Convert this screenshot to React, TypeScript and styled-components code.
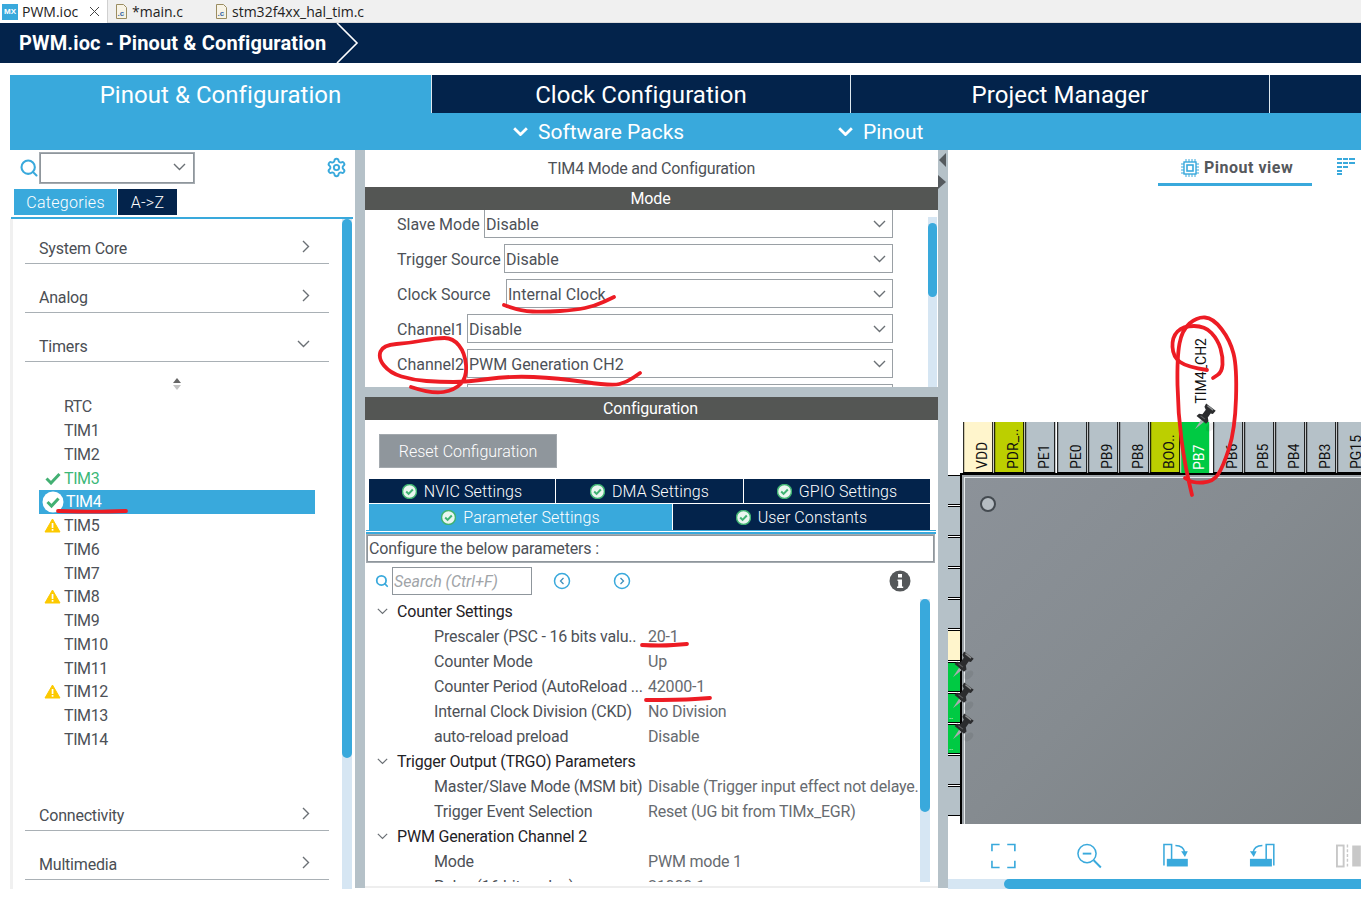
import React from 'react';
import styled, { createGlobalStyle } from 'styled-components';
import { Search, Settings } from 'lucide-react';

const NAVY = '#03234b';
const BLUE = '#39a9dc';
const GUTTER = '#b5c1c8';
const TRACK = '#d6e6f3';
const RED = '#ed1c24';

const GlobalStyle = createGlobalStyle`
  html, body {
    margin: 0;
    padding: 0;
    background: #ffffff;
    overflow: hidden;
  }
  * { box-sizing: border-box; }
`;

const Page = styled.div`
  position: relative;
  width: 1361px;
  height: 898px;
  overflow: hidden;
  background: #ffffff;
  font-family: Roboto, "Liberation Sans", sans-serif;
  color: #4d5157;
`;

/* editor tabs */
const EditorTabs = styled.div`
  display: flex;
  height: 23px;
  background: #f0f0f0;
  border-bottom: 1px solid #dcdcdc;
  font-family: "Open Sans", "Noto Sans", sans-serif;
  font-size: 14px;
  color: #222;
`;

const EditorTab = styled.div<{ $width: number; $indent: number; $active?: boolean }>`
  display: flex;
  align-items: center;
  gap: 4px;
  width: ${p => p.$width}px;
  height: 23px;
  padding-left: ${p => p.$indent}px;
  background: ${p => (p.$active ? '#ffffff' : 'transparent')};
  border-right: ${p => (p.$active ? '1px solid #d0d0d0' : 'none')};
`;

const MxLogo = styled.span`
  display: inline-flex;
  align-items: center;
  justify-content: center;
  width: 16px;
  height: 16px;
  background: ${BLUE};
  color: #ffffff;
  font-family: "Liberation Sans", sans-serif;
  font-size: 8px;
  font-weight: 700;
`;

const CloseMark = styled.svg`
  margin-left: 7px;
`;

/* breadcrumb */
const Breadcrumb = styled.div`
  display: flex;
  align-items: center;
  height: 40px;
  background: ${NAVY};
  padding-left: 19px;
  color: #ffffff;
  font-size: 20px;
  font-weight: 700;
  letter-spacing: 0.13px;
`;

const BreadcrumbArrow = styled.svg`
  margin-left: 10px;
`;

const Workspace = styled.div`
  margin: 12px 0 0 10px;
`;

const MainTabs = styled.div`
  display: flex;
  height: 38px;
  background: ${NAVY};
`;

const MainTab = styled.div<{ $active?: boolean }>`
  display: flex;
  align-items: center;
  justify-content: center;
  width: 419px;
  padding-top: 2px;
  background: ${p => (p.$active ? BLUE : NAVY)};
  border-right: 1px solid #dfe8ee;
  color: #ffffff;
  font-size: 24px;
  letter-spacing: 0.05px;
  &:first-child { width: 422px; }
`;

const SubBar = styled.div`
  display: flex;
  align-items: center;
  height: 37px;
  background: ${BLUE};
  padding-left: 503px;
  color: #ffffff;
  font-size: 21px;
`;

const SubItem = styled.div<{ $width: number }>`
  display: flex;
  align-items: center;
  gap: 10px;
  width: ${p => p.$width}px;
`;

const Columns = styled.div`
  display: grid;
  grid-template-columns: 345px 10px 573px 10px 413px;
  height: 738px;
  background: ${GUTTER};
`;

/* left column */
const LeftPanel = styled.div`
  position: relative;
  background: #ffffff;
`;

const LeftSearch = styled.div`
  display: flex;
  align-items: center;
  height: 35px;
  padding: 0 8px 0 9px;
`;

const Combo = styled.div`
  display: flex;
  align-items: center;
  justify-content: flex-end;
  width: 154px;
  height: 30px;
  margin-left: 1px;
  padding-right: 7px;
  border: 1px solid #8f969c;
  outline: 0.5px solid #a5abb0;
`;

const GearSlot = styled.div`
  display: flex;
  margin-left: auto;
`;

const ViewTabs = styled.div`
  display: flex;
  gap: 1px;
  height: 26px;
  margin: 4px 0 0 4px;
`;

const ViewTab = styled.div<{ $active?: boolean; $width: number }>`
  display: flex;
  align-items: center;
  justify-content: center;
  width: ${p => p.$width}px;
  background: ${p => (p.$active ? BLUE : NAVY)};
  color: #ffffff;
  font-size: 16px;
  font-weight: 300;
  letter-spacing: 0.3px;
`;

const DoubleRule = styled.div`
  height: 3px;
  margin: 1px 2px 0 1px;
  border-bottom: 2px solid ${BLUE};
`;

const Categories = styled.div`
  display: grid;
  grid-template-columns: 1fr 10px;
  column-gap: 13px;
  height: 670px;
  border-left: 3px solid #f0f0f0;
  padding-right: 3px;
`;

const CategoryList = styled.div`
  padding: 15px 0 0 12px;
  font-size: 16px;
`;

const Group = styled.div<{ $gap?: number }>`
  display: flex;
  align-items: center;
  justify-content: space-between;
  height: 30px;
  margin-top: ${p => p.$gap ?? 19}px;
  padding-right: 19px;
  border-bottom: 1px solid #a9b0b5;
  padding-left: 14px;
  color: #4a4e54;
  letter-spacing: -0.2px;
`;

const GroupMark = styled.span`
  display: flex;
  margin-bottom: 4px;
`;

const SortMark = styled.div`
  display: flex;
  justify-content: center;
  height: 19px;
  margin-top: 14px;
  padding-top: 2px;
`;

const TimerList = styled.div`
  width: 276px;
  margin-left: 14px;
`;

const TimerRow = styled.div<{ $selected?: boolean; $ok?: boolean }>`
  display: flex;
  align-items: center;
  height: 23.75px;
  padding-left: ${p => (p.$selected ? 0 : 2)}px;
  background: ${p => (p.$selected ? BLUE : 'transparent')};
  color: ${p => (p.$selected ? '#ffffff' : p.$ok ? '#3cb878' : '#4d5157')};
  letter-spacing: -0.4px;
`;

const TimerIcon = styled.span<{ $selected?: boolean }>`
  display: flex;
  align-items: center;
  justify-content: center;
  width: ${p => (p.$selected ? 27 : 23)}px;
  flex: none;
`;

const Scrollbar = styled.div<{ $thumbTop: number; $thumbHeight: number }>`
  position: relative;
  background: ${TRACK};
  &::after {
    content: '';
    position: absolute;
    left: 0;
    right: 0;
    top: ${p => p.$thumbTop}px;
    height: ${p => p.$thumbHeight}px;
    border-radius: 5px;
    background: ${BLUE};
  }
`;

/* middle column */
const Gutter = styled.div`
  display: flex;
  flex-direction: column;
  gap: 8px;
  padding-top: 3px;
`;

const Middle = styled.div`
  display: flex;
  flex-direction: column;
  gap: 10px;
`;

const ModePanel = styled.section`
  height: 237px;
  background: #ffffff;
  overflow: hidden;
`;

const PanelTitle = styled.div`
  display: flex;
  align-items: center;
  justify-content: center;
  height: 37px;
  font-size: 16px;
  letter-spacing: -0.19px;
  color: #4d5157;
`;

const DarkBar = styled.div`
  display: flex;
  align-items: center;
  justify-content: center;
  height: 23px;
  padding-right: 2px;
  background: #545654;
  color: #ffffff;
  font-size: 16px;
  letter-spacing: -0.1px;
`;

const ModeBody = styled.div`
  display: grid;
  grid-template-columns: 1fr 9px;
  column-gap: 35px;
  height: 177px;
  overflow: hidden;
  padding-right: 1px;
`;

const ModeRows = styled.div`
  display: flex;
  flex-direction: column;
  gap: 6px;
  margin-top: -1px;
  padding-left: 32px;
  font-size: 16px;
`;

const ModeRow = styled.div`
  display: flex;
  align-items: center;
  flex: none;
  height: 29px;
`;

const ModeLabel = styled.div<{ $width: number }>`
  width: ${p => p.$width}px;
  flex: none;
  padding-top: 1px;
  white-space: nowrap;
`;

const ModeSelect = styled.div`
  display: flex;
  align-items: center;
  justify-content: space-between;
  flex: 1;
  height: 29px;
  padding: 1px 6px 0 1px;
  border: 1px solid #9aa0a5;
`;

const ModeTrack = styled(Scrollbar)`
  margin-top: 7px;
  height: 170px;
`;

const ConfigPanel = styled.section`
  height: 491px;
  background: #ffffff;
`;

const ResetButton = styled.div`
  display: flex;
  align-items: center;
  justify-content: center;
  width: 178px;
  height: 34px;
  margin: 14px 0 11px 14px;
  background: #8f969c;
  border: 1px solid #a3a9ae;
  color: #ffffff;
  font-size: 16px;
  font-weight: 300;
`;

const SettingTabs = styled.div`
  display: grid;
  gap: 1px;
  width: 561px;
  margin-left: 4px;
`;

const SettingRow = styled.div<{ $columns: string; $height: number }>`
  display: grid;
  grid-template-columns: ${p => p.$columns};
  gap: 1px;
  height: ${p => p.$height}px;
`;

const SettingTab = styled.div<{ $active?: boolean }>`
  display: flex;
  align-items: center;
  justify-content: center;
  gap: 7px;
  background: ${p => (p.$active ? BLUE : NAVY)};
  color: #ffffff;
  font-size: 16px;
  font-weight: 300;
  letter-spacing: 0.1px;
`;

const ConfigRule = styled.div`
  height: 4px;
  margin: 0 2px 0 1px;
  border-top: 1px solid ${BLUE};
  border-bottom: 2px solid ${BLUE};
`;

const ConfigureBox = styled.div`
  display: flex;
  align-items: center;
  height: 27px;
  margin: 1px 4px 0 2px;
  padding-left: 1px;
  border: 1px solid #8f969c;
  outline: 0.5px solid #a5abb0;
  font-size: 16px;
  letter-spacing: -0.18px;
`;

const SearchRow = styled.div`
  display: flex;
  align-items: center;
  height: 28px;
  margin-top: 5px;
  padding: 0 27px 0 10px;
`;

const SearchBox = styled.div`
  display: flex;
  align-items: center;
  width: 140px;
  height: 28px;
  margin: 0 21px 0 3px;
  padding-left: 1px;
  border: 1px solid #8f969c;
  color: #a0a4a8;
  font-size: 16px;
  font-style: italic;
`;

const NavSlot = styled.div`
  display: flex;
  gap: 42px;
`;

const InfoSlot = styled.div`
  display: flex;
  margin-left: auto;
`;

const TreeArea = styled.div`
  display: grid;
  grid-template-columns: 1fr 10px;
  column-gap: 1px;
  height: 289px;
  margin-top: 4px;
  padding: 0 8px 6px 2px;
  overflow: hidden;
  font-size: 16px;
  letter-spacing: -0.2px;
  border-bottom: 2px solid #eeeeee;
`;

const Tree = styled.div`
  height: 283px;
  overflow: hidden;
`;

const TreeSection = styled.div`
  display: flex;
  align-items: center;
  gap: 9px;
  height: 25px;
  padding-left: 10px;
  color: #1f2226;
`;

const TreeRow = styled.div`
  display: grid;
  grid-template-columns: 214px 1fr;
  align-items: center;
  height: 25px;
  padding-left: 67px;
  white-space: nowrap;
`;

const TreeValue = styled.span`
  color: #676b70;
`;

/* right column */
const RightPanel = styled.section`
  display: flex;
  flex-direction: column;
  background: #ffffff;
  overflow: hidden;
`;

const ViewHeader = styled.div`
  display: flex;
  align-items: center;
  flex: none;
  height: 36px;
  padding-left: 210px;
`;

const PinoutView = styled.div`
  display: flex;
  align-items: center;
  gap: 5px;
  width: 154px;
  height: 34px;
  margin-top: 1px;
  padding: 1px 0 0 23px;
  border-bottom: 3px solid ${BLUE};
  color: #55585c;
  font-size: 16px;
  font-weight: 700;
  letter-spacing: 0.5px;
`;

const ListViewIcon = styled.svg`
  margin-left: 25px;
  margin-top: -3px;
`;

const Canvas = styled.div`
  position: relative;
  flex: none;
  height: 638px;
  overflow: hidden;
  background: #ffffff;
`;

const TopPins = styled.div`
  position: absolute;
  left: 15px;
  top: 236px;
  display: flex;
  gap: 1px;
`;

const TopPin = styled.div<{ $bg: string; $light?: boolean; $active?: boolean }>`
  display: flex;
  align-items: center;
  justify-content: flex-start;
  flex: none;
  width: ${p => (p.$active ? 28.2 : 30.2)}px;
  height: 51px;
  margin-right: ${p => (p.$active ? 2 : 0)}px;
  padding-top: 3px;
  padding-right: 8px;
  background: ${p => p.$bg};
  border: ${p => (p.$active ? '0' : '1px solid #000')};
  border-bottom: 0;
  color: ${p => (p.$light ? '#ffffff' : '#111')};
  font-size: 14px;
  writing-mode: vertical-rl;
  transform: rotate(180deg);
  white-space: nowrap;
  overflow: hidden;
`;

const SidePins = styled.div`
  position: absolute;
  left: 0;
  top: 289px;
  display: flex;
  flex-direction: column;
  gap: 1px;
  width: 12px;
`;

const SidePin = styled.div<{ $bg: string }>`
  position: relative;
  flex: none;
  height: 30.1px;
  background: ${p => p.$bg};
  border-top: 1px solid #000;
  border-bottom: 1px solid #000;
  color: #ffffff;
  font-size: 8px;
  line-height: 8px;
  text-align: left;
  padding: 19px 0 0 1px;
  overflow: hidden;
`;

const Chip = styled.div`
  position: absolute;
  left: 12px;
  top: 287px;
  width: 420px;
  height: 360px;
  padding: 2px;
  background: #9da3a8;
  border: 2px solid #000;
`;

const ChipFace = styled.div`
  position: relative;
  height: 100%;
  border-top: 1px solid #e8ecee;
  border-left: 1px solid #e8ecee;
  background: linear-gradient(135deg, #8c9299 0%, #858b90 45%, #797e81 100%);
`;

const ChipDot = styled.div`
  position: absolute;
  left: 15px;
  top: 18px;
  width: 16px;
  height: 16px;
  border-radius: 50%;
  border: 2px solid #444a50;
  background: #b5bcc2;
`;

const PinLabel = styled.div`
  position: absolute;
  left: 245px;
  top: 152px;
  writing-mode: vertical-rl;
  transform: rotate(180deg);
  color: #111;
  font-size: 14px;
`;

const PinSlot = styled.div<{ $x: number; $y: number }>`
  position: absolute;
  left: ${p => p.$x}px;
  top: ${p => p.$y}px;
  display: flex;
`;

const BottomTools = styled.div`
  display: flex;
  align-items: center;
  flex: none;
  gap: 61px;
  height: 55px;
  padding: 8px 0 0 43px;
`;

const BottomTrack = styled.div`
  flex: none;
  height: 10px;
  background: ${TRACK};
  padding-left: 56px;
`;

const BottomThumb = styled.div`
  height: 10px;
  border-radius: 5px 0 0 5px;
  background: ${BLUE};
`;

const Annotations = styled.svg`
  position: absolute;
  left: 0;
  top: 0;
  pointer-events: none;
`;

/* little drawings */
const Chevron: React.FC<{ color?: string; width?: number; strokeWidth?: number }> = ({
  color = '#6b7075',
  width = 13,
  strokeWidth = 1.4,
}) => (
  <svg width={width} height={width * 0.62} viewBox="0 0 13 8" fill="none">
    <path d="M1 1l5.5 5.5L12 1" stroke={color} strokeWidth={strokeWidth} />
  </svg>
);

const ChevronRight = () => (
  <svg width="8" height="13" viewBox="0 0 8 13" fill="none">
    <path d="M1 1l5.5 5.5L1 12" stroke="#6b7075" strokeWidth="1.4" />
  </svg>
);

const FileIcon = () => (
  <svg width="13" height="15" viewBox="0 0 13 15">
    <path d="M1.5.5h7l3 3v11h-10z" fill="#f7f3e6" stroke="#9a8c60" />
    <text x="2.5" y="11.5" fontSize="8" fontWeight="700" fill="#3a68a8" fontFamily="Liberation Sans">.c</text>
  </svg>
);

const GreenCheck = () => (
  <svg width="16" height="13" viewBox="0 0 16 13" fill="none">
    <path d="M1.5 6.5l4.5 4.5 8.5-9" stroke="#43b073" strokeWidth="3" />
  </svg>
);

const Warning = () => (
  <svg width="17" height="15" viewBox="0 0 17 15">
    <path d="M8.5 1L16 14H1z" fill="#fcc900" stroke="#fcc900" strokeLinejoin="round" />
    <rect x="7.7" y="5" width="1.7" height="5" fill="#fff" />
    <rect x="7.7" y="11" width="1.7" height="1.7" fill="#fff" />
  </svg>
);

const SelectedCheck = () => (
  <svg width="22" height="22" viewBox="0 0 22 22" fill="none">
    <circle cx="11" cy="11" r="10.5" fill="#fff" />
    <path d="M5.5 11l4 4 7-7.5" stroke="#43b073" strokeWidth="3" />
  </svg>
);

const TabCheck = () => (
  <svg width="15" height="15" viewBox="0 0 15 15" fill="none">
    <circle cx="7.5" cy="7.5" r="7" fill="#e9f6ef" stroke="#3fb272" strokeWidth="1.5" />
    <path d="M4.2 7.5l2.4 2.4 4.2-4.4" stroke="#3fb272" strokeWidth="2" />
  </svg>
);

const NavCircle: React.FC<{ back?: boolean }> = ({ back }) => (
  <svg width="18" height="18" viewBox="0 0 18 18" fill="none">
    <circle cx="9" cy="9" r="7.5" stroke={BLUE} strokeWidth="1.5" />
    <path d={back ? 'M10.5 6L7.5 9l3 3' : 'M7.5 6l3 3-3 3'} stroke="#3f8fbb" strokeWidth="1.3" />
  </svg>
);

const InfoIcon = () => (
  <svg width="22" height="22" viewBox="0 0 22 22">
    <circle cx="11" cy="11" r="10.5" fill="#55585a" />
    <rect x="9" y="4" width="4" height="3.5" fill="#fff" />
    <path d="M8.5 9.5H13v7h1.2V18H8v-1.5h1.2v-5.5H8.5z" fill="#fff" />
  </svg>
);

const ChipIcon = () => (
  <svg width="18" height="18" viewBox="0 0 18 18" fill="none" stroke={BLUE}>
    <rect x="3" y="3" width="12" height="12" strokeWidth="1.4" />
    <rect x="6" y="6" width="6" height="6" strokeWidth="1.6" />
    <path d="M5 0v3M8 0v3M11 0v3M14 0v3M5 15v3M8 15v3M11 15v3M14 15v3M0 5h3M0 8h3M0 11h3M0 14h3M15 5h3M15 8h3M15 11h3M15 14h3" strokeWidth="1" />
  </svg>
);

const Pushpin = () => (
  <svg width="34" height="36" viewBox="0 0 30 32">
    <ellipse cx="20" cy="24" rx="5" ry="3" fill="#000" opacity="0.07" transform="rotate(-40 20 24)" />
    <path d="M6 26l5.5-8.5 2.5 2z" fill="#a9adb0" />
    <path d="M16 3l8.5 6.5-2.5 3-2-.5-2.5 3.5.6 3.5-2.2 2.2L7.5 14.2l2.2-2 3 .5 3-4-1.2-2.6z" fill="#2b2c2e" />
    <path d="M17.2 5l5 4" stroke="#8a8c8e" strokeWidth="1.3" />
    <path d="M11 14l4 3" stroke="#5c5e60" strokeWidth="1" />
  </svg>
);

const FitIcon = () => (
  <svg width="26" height="26" viewBox="0 0 26 26" fill="none" stroke={BLUE} strokeWidth="1.7">
    <path d="M1 8V1h8M17 1h8v7M25 18v7h-8M9 25H1v-7" />
  </svg>
);

const ZoomOutIcon = () => (
  <svg width="26" height="26" viewBox="0 0 26 26" fill="none" stroke={BLUE}>
    <circle cx="10.5" cy="10.5" r="9.5" strokeWidth="1.6" />
    <path d="M6 10.5h9" strokeWidth="2" />
    <path d="M17.5 17.5L25 25" strokeWidth="2" />
  </svg>
);

const RotateRightIcon = () => (
  <svg width="27" height="25" viewBox="0 0 27 25" fill="none" stroke={BLUE}>
    <path d="M1 23V1h8v16" strokeWidth="1.6" />
    <rect x="4" y="16" width="22" height="8" fill={BLUE} stroke="none" />
    <path d="M13 2c5 0 9 2 10 8" strokeWidth="1.6" />
    <path d="M19 8h7l-3 6z" fill={BLUE} stroke="none" />
  </svg>
);

const RotateLeftIcon = () => (
  <svg width="27" height="25" viewBox="0 0 27 25" fill="none" stroke={BLUE}>
    <path d="M26 23V1h-8v16" strokeWidth="1.6" />
    <rect x="1" y="16" width="23" height="8" fill={BLUE} stroke="none" />
    <path d="M14 2c-5 0-9 2-10 8" strokeWidth="1.6" />
    <path d="M1 8h7l-3 6z" fill={BLUE} stroke="none" />
  </svg>
);

const SplitIcon = () => (
  <svg width="26" height="24" viewBox="0 0 26 24" fill="none">
    <rect x="1" y="1" width="7" height="22" stroke="#c8c8c8" strokeWidth="2" />
    <path d="M12 0v24" stroke="#c8c8c8" strokeWidth="1.5" strokeDasharray="3 2" />
    <rect x="17" y="1" width="9" height="22" fill="#c8c8c8" />
  </svg>
);

/* freehand marks */
type Pt = [number, number];

const smooth = (pts: Pt[]) => {
  let d = `M${pts[0][0]} ${pts[0][1]}`;
  for (let i = 1; i < pts.length - 1; i++) {
    const mx = (pts[i][0] + pts[i + 1][0]) / 2;
    const my = (pts[i][1] + pts[i + 1][1]) / 2;
    d += ` Q${pts[i][0]} ${pts[i][1]} ${mx} ${my}`;
  }
  const last = pts[pts.length - 1];
  return `${d} L${last[0]} ${last[1]}`;
};

const strokes: Pt[][] = [
  [[58, 511], [90, 512], [126, 511]],
  [[504, 305], [520, 311], [545, 312], [575, 310], [595, 306], [614, 297]],
  [[411, 387], [432, 394], [455, 390], [467, 377], [465, 353], [453, 338], [436, 338], [410, 343], [383, 345], [378, 358], [390, 373], [413, 380], [440, 382], [467, 382], [509, 376], [558, 378], [612, 386], [627, 382], [640, 373]],
  [[642, 645], [660, 646], [687, 644]],
  [[646, 700], [680, 700], [710, 698]],
  [[1192, 495], [1185, 467], [1178, 413], [1177, 357], [1182, 330], [1197, 317], [1213, 318], [1230, 340], [1237, 367], [1235, 430], [1223, 467], [1213, 482], [1193, 483], [1185, 478]],
  [[1207, 370], [1187, 367], [1173, 357], [1172, 337], [1183, 326], [1205, 326], [1218, 340], [1223, 357], [1222, 372], [1213, 378]],
];

const modeRows = [
  { label: 'Slave Mode', width: 87, value: 'Disable' },
  { label: 'Trigger Source', width: 107, value: 'Disable' },
  { label: 'Clock Source', width: 109, value: 'Internal Clock' },
  { label: 'Channel1', width: 70, value: 'Disable' },
  { label: 'Channel2', width: 70, value: 'PWM Generation CH2' },
  { label: '', width: 70, value: '' },
];

const timers: { name: string; state?: 'ok' | 'warn' | 'selected' }[] = [
  { name: 'RTC' },
  { name: 'TIM1' },
  { name: 'TIM2' },
  { name: 'TIM3', state: 'ok' },
  { name: 'TIM4', state: 'selected' },
  { name: 'TIM5', state: 'warn' },
  { name: 'TIM6' },
  { name: 'TIM7' },
  { name: 'TIM8', state: 'warn' },
  { name: 'TIM9' },
  { name: 'TIM10' },
  { name: 'TIM11' },
  { name: 'TIM12', state: 'warn' },
  { name: 'TIM13' },
  { name: 'TIM14' },
];

const tree: { section?: string; label?: string; value?: string }[] = [
  { section: 'Counter Settings' },
  { label: 'Prescaler (PSC - 16 bits valu..', value: '20-1' },
  { label: 'Counter Mode', value: 'Up' },
  { label: 'Counter Period (AutoReload ...', value: '42000-1' },
  { label: 'Internal Clock Division (CKD)', value: 'No Division' },
  { label: 'auto-reload preload', value: 'Disable' },
  { section: 'Trigger Output (TRGO) Parameters' },
  { label: 'Master/Slave Mode (MSM bit)', value: 'Disable (Trigger input effect not delaye.' },
  { label: 'Trigger Event Selection', value: 'Reset (UG bit from TIMx_EGR)' },
  { section: 'PWM Generation Channel 2' },
  { label: 'Mode', value: 'PWM mode 1' },
  { label: 'Pulse (16 bits value)', value: '21000-1' },
];

const topPins = [
  { name: 'VDD', bg: '#fff5cc' },
  { name: 'PDR_..', bg: '#bccf00' },
  { name: 'PE1', bg: GUTTER },
  { name: 'PE0', bg: GUTTER },
  { name: 'PB9', bg: GUTTER },
  { name: 'PB8', bg: GUTTER },
  { name: 'BOO..', bg: '#bccf00' },
  { name: 'PB7', bg: '#00ca43', light: true, active: true },
  { name: 'PB6', bg: GUTTER },
  { name: 'PB5', bg: GUTTER },
  { name: 'PB4', bg: GUTTER },
  { name: 'PB3', bg: GUTTER },
  { name: 'PG15', bg: GUTTER },
];

const sidePinColor = (i: number) => {
  if (i === 5) return '#fff5cc';
  if (i >= 6 && i <= 8) return '#00ca43';
  return GUTTER;
};

const App: React.FC = () => (
  <Page>
    <GlobalStyle />

    <EditorTabs>
      <EditorTab $width={108} $indent={2} $active>
        <MxLogo>MX</MxLogo>
        PWM.ioc
        <CloseMark width="11" height="11" viewBox="0 0 11 11" fill="none">
          <path d="M1 1l9 9M10 1l-9 9" stroke="#444" strokeWidth="1" />
        </CloseMark>
      </EditorTab>
      <EditorTab $width={99} $indent={7}>
        <FileIcon />
        *main.c
      </EditorTab>
      <EditorTab $width={200} $indent={8}>
        <FileIcon />
        stm32f4xx_hal_tim.c
      </EditorTab>
    </EditorTabs>

    <Breadcrumb>
      PWM.ioc - Pinout &amp; Configuration
      <BreadcrumbArrow width="24" height="40" viewBox="0 0 24 40" fill="none">
        <path d="M1 0l20 20L1 40" stroke="#fff" strokeWidth="1.6" />
      </BreadcrumbArrow>
    </Breadcrumb>

    <Workspace>
      <MainTabs>
        <MainTab $active>Pinout &amp; Configuration</MainTab>
        <MainTab>Clock Configuration</MainTab>
        <MainTab>Project Manager</MainTab>
      </MainTabs>

      <SubBar>
        <SubItem $width={325}>
          <Chevron color="#fff" width={15} strokeWidth={2.4} />
          Software Packs
        </SubItem>
        <SubItem $width={200}>
          <Chevron color="#fff" width={15} strokeWidth={2.4} />
          Pinout
        </SubItem>
      </SubBar>

      <Columns>
        <LeftPanel>
          <LeftSearch>
            <Search size={20} color={BLUE} strokeWidth={2.5} />
            <Combo>
              <Chevron />
            </Combo>
            <GearSlot>
              <Settings size={21} color={BLUE} strokeWidth={2.2} />
            </GearSlot>
          </LeftSearch>
          <ViewTabs>
            <ViewTab $active $width={103}>Categories</ViewTab>
            <ViewTab $width={59}>A-&gt;Z</ViewTab>
          </ViewTabs>
          <DoubleRule />
          <Categories>
            <CategoryList>
              <Group $gap={0}>
                System Core
                <GroupMark><ChevronRight /></GroupMark>
              </Group>
              <Group>
                Analog
                <GroupMark><ChevronRight /></GroupMark>
              </Group>
              <Group>
                Timers
                <GroupMark><Chevron /></GroupMark>
              </Group>
              <SortMark>
                <svg width="10" height="12" viewBox="0 0 10 12">
                  <path d="M5 0l4 5H1z" fill="#666" />
                  <path d="M1 7h8l-4 5z" fill="#c4c4c4" />
                </svg>
              </SortMark>
              <TimerList>
                {timers.map(t => (
                  <TimerRow key={t.name} $selected={t.state === 'selected'} $ok={t.state === 'ok'}>
                    <TimerIcon $selected={t.state === 'selected'}>
                      {t.state === 'ok' && <GreenCheck />}
                      {t.state === 'warn' && <Warning />}
                      {t.state === 'selected' && <SelectedCheck />}
                    </TimerIcon>
                    {t.name}
                  </TimerRow>
                ))}
              </TimerList>
              <Group $gap={50}>
                Connectivity
                <GroupMark><ChevronRight /></GroupMark>
              </Group>
              <Group>
                Multimedia
                <GroupMark><ChevronRight /></GroupMark>
              </Group>
            </CategoryList>
            <Scrollbar $thumbTop={0} $thumbHeight={539} />
          </Categories>
        </LeftPanel>

        <Gutter />

        <Middle>
          <ModePanel>
            <PanelTitle>TIM4 Mode and Configuration</PanelTitle>
            <DarkBar>Mode</DarkBar>
            <ModeBody>
              <ModeRows>
                {modeRows.map((r, i) => (
                  <ModeRow key={i}>
                    <ModeLabel $width={r.width}>{r.label}</ModeLabel>
                    <ModeSelect>
                      {r.value}
                      <Chevron />
                    </ModeSelect>
                  </ModeRow>
                ))}
              </ModeRows>
              <ModeTrack $thumbTop={6} $thumbHeight={74} />
            </ModeBody>
          </ModePanel>

          <ConfigPanel>
            <DarkBar>Configuration</DarkBar>
            <ResetButton>Reset Configuration</ResetButton>
            <SettingTabs>
              <SettingRow $columns="186px 187px 1fr" $height={24}>
                <SettingTab><TabCheck />NVIC Settings</SettingTab>
                <SettingTab><TabCheck />DMA Settings</SettingTab>
                <SettingTab><TabCheck />GPIO Settings</SettingTab>
              </SettingRow>
              <SettingRow $columns="303px 1fr" $height={26}>
                <SettingTab $active><TabCheck />Parameter Settings</SettingTab>
                <SettingTab><TabCheck />User Constants</SettingTab>
              </SettingRow>
            </SettingTabs>
            <ConfigRule />
            <ConfigureBox>Configure the below parameters :</ConfigureBox>
            <SearchRow>
              <Search size={14} color={BLUE} strokeWidth={3} />
              <SearchBox>Search (Ctrl+F)</SearchBox>
              <NavSlot>
                <NavCircle back />
                <NavCircle />
              </NavSlot>
              <InfoSlot>
                <InfoIcon />
              </InfoSlot>
            </SearchRow>
            <TreeArea>
              <Tree>
                {tree.map((row, i) =>
                  row.section ? (
                    <TreeSection key={i}>
                      <Chevron width={11} />
                      {row.section}
                    </TreeSection>
                  ) : (
                    <TreeRow key={i}>
                      <span>{row.label}</span>
                      <TreeValue>{row.value}</TreeValue>
                    </TreeRow>
                  ),
                )}
              </Tree>
              <Scrollbar $thumbTop={0} $thumbHeight={213} />
            </TreeArea>
          </ConfigPanel>
        </Middle>

        <Gutter>
          <svg width="8" height="14" viewBox="0 0 8 14"><path d="M8 0v14L1 7z" fill="#555a5e" /></svg>
          <svg width="8" height="14" viewBox="0 0 8 14"><path d="M0 0l8 7-8 7z" fill="#555a5e" /></svg>
        </Gutter>

        <RightPanel>
          <ViewHeader>
            <PinoutView>
              <ChipIcon />
              Pinout view
            </PinoutView>
            <ListViewIcon width="18" height="17" viewBox="0 0 18 17" fill={BLUE}>
              <path d="M0 0h5v2H0zM6 0h5v2H6zM12 0h6v2h-6zM0 4h5v2H0zM6 4h5v2H6zM12 4h6v2h-6zM0 8h5v2H0zM6 8h5v2H6zM0 12h5v2H0zM0 15h5v2H0z" />
            </ListViewIcon>
          </ViewHeader>

          <Canvas>
            <PinLabel>TIM4_CH2</PinLabel>
            <SidePins>
              {Array.from({ length: 11 }, (_, i) => (
                <SidePin key={i} $bg={sidePinColor(i)}>{i === 7 || i === 8 ? '..' : ''}</SidePin>
              ))}
            </SidePins>
            <TopPins>
              {topPins.map(pin => (
                <TopPin key={pin.name} $bg={pin.bg} $light={pin.light} $active={pin.active}>
                  {pin.name}
                </TopPin>
              ))}
            </TopPins>
            <Chip>
              <ChipFace>
                <ChipDot />
              </ChipFace>
            </Chip>
            <PinSlot $x={240} $y={214}><Pushpin /></PinSlot>
            <PinSlot $x={-2} $y={462}><Pushpin /></PinSlot>
            <PinSlot $x={-2} $y={493}><Pushpin /></PinSlot>
            <PinSlot $x={-2} $y={524}><Pushpin /></PinSlot>
          </Canvas>

          <BottomTools>
            <FitIcon />
            <ZoomOutIcon />
            <RotateRightIcon />
            <RotateLeftIcon />
            <SplitIcon />
          </BottomTools>
          <BottomTrack>
            <BottomThumb />
          </BottomTrack>
        </RightPanel>
      </Columns>
    </Workspace>

    <Annotations width="1361" height="898" viewBox="0 0 1361 898" fill="none">
      {strokes.map((pts, i) => (
        <path key={i} d={smooth(pts)} stroke={RED} strokeWidth="3.8" strokeLinecap="round" strokeLinejoin="round" />
      ))}
    </Annotations>
  </Page>
);

export default App;
